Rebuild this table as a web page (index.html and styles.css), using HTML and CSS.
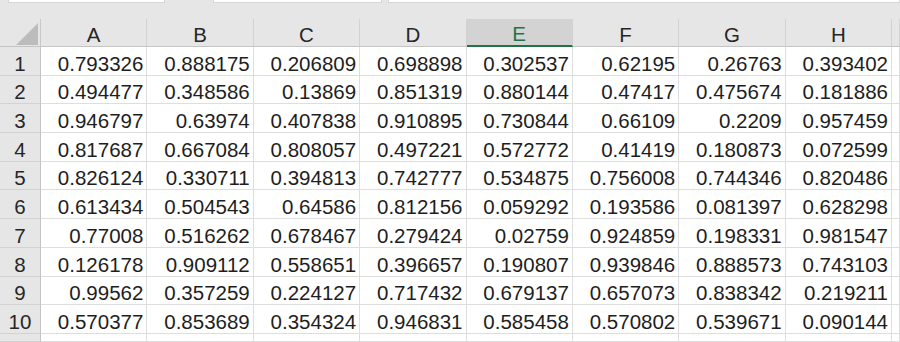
FILE: index.html
```html
<!DOCTYPE html>
<html>
<head>
<meta charset="utf-8">
<link rel="stylesheet" href="styles.css">
</head>
<body>
<div class="top">
  <div class="tab t1"></div>
  <div class="tab t2"></div>
  <div class="tab t3"></div>
</div>
<div class="sheet">
  <div class="corner"><svg width="22" height="22" viewBox="0 0 22 22"><polygon points="22,0 22,22 0,22" fill="#bcbcbc"/></svg></div>
  <div class="ch">A</div><div class="ch">B</div><div class="ch">C</div><div class="ch">D</div><div class="ch sel">E</div><div class="ch">F</div><div class="ch">G</div><div class="ch">H</div><div class="ch"></div>

  <div class="rh">1</div><div class="c">0.793326</div><div class="c">0.888175</div><div class="c">0.206809</div><div class="c">0.698898</div><div class="c">0.302537</div><div class="c">0.62195</div><div class="c">0.26763</div><div class="c">0.393402</div><div class="c"></div>
  <div class="rh">2</div><div class="c">0.494477</div><div class="c">0.348586</div><div class="c">0.13869</div><div class="c">0.851319</div><div class="c">0.880144</div><div class="c">0.47417</div><div class="c">0.475674</div><div class="c">0.181886</div><div class="c"></div>
  <div class="rh">3</div><div class="c">0.946797</div><div class="c">0.63974</div><div class="c">0.407838</div><div class="c">0.910895</div><div class="c">0.730844</div><div class="c">0.66109</div><div class="c">0.2209</div><div class="c">0.957459</div><div class="c"></div>
  <div class="rh">4</div><div class="c">0.817687</div><div class="c">0.667084</div><div class="c">0.808057</div><div class="c">0.497221</div><div class="c">0.572772</div><div class="c">0.41419</div><div class="c">0.180873</div><div class="c">0.072599</div><div class="c"></div>
  <div class="rh">5</div><div class="c">0.826124</div><div class="c">0.330711</div><div class="c">0.394813</div><div class="c">0.742777</div><div class="c">0.534875</div><div class="c">0.756008</div><div class="c">0.744346</div><div class="c">0.820486</div><div class="c"></div>
  <div class="rh">6</div><div class="c">0.613434</div><div class="c">0.504543</div><div class="c">0.64586</div><div class="c">0.812156</div><div class="c">0.059292</div><div class="c">0.193586</div><div class="c">0.081397</div><div class="c">0.628298</div><div class="c"></div>
  <div class="rh">7</div><div class="c">0.77008</div><div class="c">0.516262</div><div class="c">0.678467</div><div class="c">0.279424</div><div class="c">0.02759</div><div class="c">0.924859</div><div class="c">0.198331</div><div class="c">0.981547</div><div class="c"></div>
  <div class="rh">8</div><div class="c">0.126178</div><div class="c">0.909112</div><div class="c">0.558651</div><div class="c">0.396657</div><div class="c">0.190807</div><div class="c">0.939846</div><div class="c">0.888573</div><div class="c">0.743103</div><div class="c"></div>
  <div class="rh">9</div><div class="c">0.99562</div><div class="c">0.357259</div><div class="c">0.224127</div><div class="c">0.717432</div><div class="c">0.679137</div><div class="c">0.657073</div><div class="c">0.838342</div><div class="c">0.219211</div><div class="c"></div>
  <div class="rh">10</div><div class="c">0.570377</div><div class="c">0.853689</div><div class="c">0.354324</div><div class="c">0.946831</div><div class="c">0.585458</div><div class="c">0.570802</div><div class="c">0.539671</div><div class="c">0.090144</div><div class="c"></div>
  <div class="rh"></div><div class="c"></div><div class="c"></div><div class="c"></div><div class="c"></div><div class="c"></div><div class="c"></div><div class="c"></div><div class="c"></div><div class="c"></div>
</div>
</body>
</html>
```
FILE: styles.css
```css
* { box-sizing: border-box; }
html, body { margin: 0; padding: 0; }
body {
  width: 900px;
  height: 342px;
  overflow: hidden;
  background: #ffffff;
  font-family: "Liberation Sans", Arial, sans-serif;
  color: #1e1e1e;
}
.top {
  height: 19px;
  background: #e6e6e6;
  display: flex;
  align-items: flex-start;
}
.tab {
  height: 3px;
  background: #ffffff;
  border: 1px solid #d6d6d6;
  border-top: none;
}
.t1 { margin-left: 8px; width: 157px; }
.t2 { margin-left: 48px; width: 169px; }
.t3 { margin-left: 6px; flex: 1; }
.sheet {
  display: grid;
  grid-template-columns: 41px repeat(8, 106.375px) 1fr;
  grid-template-rows: 28px repeat(10, 28.7px) 1fr;
  height: 323px;
  font-size: 20.5px;
  line-height: 23px;
}
.corner {
  background: #e6e6e6;
  border-right: 1px solid #c8c8c8;
  border-bottom: 1px solid #c4c4c4;
  display: flex;
  justify-content: flex-end;
  align-items: flex-end;
  padding: 0 2px 1px 0;
}
.corner svg { display: block; }
.ch {
  background: #e6e6e6;
  border-right: 1px solid #d2d2d2;
  border-bottom: 1px solid #c4c4c4;
  display: flex;
  justify-content: center;
  align-items: flex-end;
  color: #262626;
}
.ch.sel {
  background: #d3d3d3;
  color: #217346;
  border-bottom: 2px solid #217346;
}
.rh {
  background: #e6e6e6;
  border-right: 1px solid #c4c4c4;
  border-bottom: 1px solid #d2d2d2;
  display: flex;
  justify-content: center;
  align-items: flex-end;
  color: #262626;
}
.c {
  border-right: 1px solid #dedede;
  border-bottom: 1px solid #dedede;
  display: flex;
  justify-content: flex-end;
  align-items: flex-end;
  padding-right: 3px;
  white-space: nowrap;
}
```
